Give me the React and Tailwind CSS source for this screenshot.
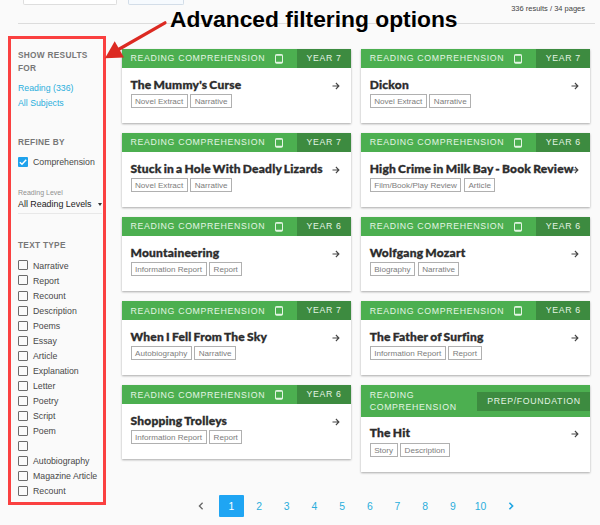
import clsx from 'clsx';

const textTypes = [
  'Narrative',
  'Report',
  'Recount',
  'Description',
  'Poems',
  'Essay',
  'Article',
  'Explanation',
  'Letter',
  'Poetry',
  'Script',
  'Poem',
  '',
  'Autobiography',
  'Magazine Article',
  'Recount',
];

const leftCards = [
  { title: "The Mummy's Curse", year: 'YEAR 7', tags: ['Novel Extract', 'Narrative'] },
  { title: 'Stuck in a Hole With Deadly Lizards', year: 'YEAR 7', tags: ['Novel Extract', 'Narrative'] },
  { title: 'Mountaineering', year: 'YEAR 6', tags: ['Information Report', 'Report'] },
  { title: 'When I Fell From The Sky', year: 'YEAR 7', tags: ['Autobiography', 'Narrative'] },
  { title: 'Shopping Trolleys', year: 'YEAR 6', tags: ['Information Report', 'Report'] },
];

const rightCards = [
  { title: 'Dickon', year: 'YEAR 7', tags: ['Novel Extract', 'Narrative'] },
  { title: 'High Crime in Milk Bay - Book Review', year: 'YEAR 6', tags: ['Film/Book/Play Review', 'Article'] },
  { title: 'Wolfgang Mozart', year: 'YEAR 6', tags: ['Biography', 'Narrative'] },
  { title: 'The Father of Surfing', year: 'YEAR 6', tags: ['Information Report', 'Report'] },
  { title: 'The Hit', year: 'PREP/FOUNDATION', tags: ['Story', 'Description'], tall: true },
];

const pages = [1, 2, 3, 4, 5, 6, 7, 8, 9, 10];

function TabletIcon() {
  return (
    <svg className="w-[8px] h-[10px] shrink-0" viewBox="0 0 8 10" fill="none">
      <rect x="0.5" y="0.6" width="7" height="8.6" rx="0.9" stroke="#e4f5e4" />
      <path d="M0.5 1.1h7M0.5 8.5h7" stroke="#e4f5e4" strokeWidth="1.3" />
    </svg>
  );
}

function ArrowIcon() {
  return (
    <svg className="w-[8px] h-[8px] shrink-0" viewBox="0 0 8 8" fill="none" stroke="#444" strokeWidth="1.1">
      <path d="M0.5 4h6.3M3.9 1L6.9 4L3.9 7" />
    </svg>
  );
}

function Checkbox({ label, checked }) {
  return (
    <label className="flex items-center h-[15.07px] gap-[5px]">
      <span
        className={clsx(
          'flex items-center justify-center w-[10px] h-[10px] rounded-[1px] shrink-0',
          checked ? 'bg-[#1fa2ec]' : 'border border-[#6b6b6b]'
        )}
      >
        {checked && (
          <svg className="w-[8px] h-[8px]" viewBox="0 0 8 8" fill="none" stroke="white" strokeWidth="1.4">
            <path d="M0.8 4.2L3 6.3L7.2 1.8" />
          </svg>
        )}
      </span>
      <span className="pt-px text-[8.75px] leading-none text-[#484848] whitespace-nowrap">{label}</span>
    </label>
  );
}

function SectionTitle({ children }) {
  return (
    <h3 className="text-[8.3px] leading-[12.7px] font-bold tracking-[0.28px] text-[#777]">{children}</h3>
  );
}

function Sidebar() {
  return (
    <aside className="w-[98px] h-[469px] mt-[12px] ml-[8px] shrink-0 border-[3px] border-[#fa4040] pl-[7px] pt-[10.3px]">
      <SectionTitle>
        SHOW RESULTS
        <br />
        FOR
      </SectionTitle>
      <div className="mt-[6px] text-[8.75px] leading-[15px] text-[#2aaedc]">
        <div>Reading (336)</div>
        <div>All Subjects</div>
      </div>

      <div className="mt-[25px]">
        <SectionTitle>REFINE BY</SectionTitle>
      </div>
      <div className="mt-[5.7px]">
        <Checkbox label="Comprehension" checked />
      </div>

      {/* Reading level select */}
      <div className="mt-[18.5px] w-[84px] h-[26px] border-b border-[#e8e8e8]">
        <div className="text-[7px] leading-[9px] text-[#919191]">Reading Level</div>
        <div className="flex items-center justify-between mt-[1.5px] text-[8.9px] leading-[13px] text-[#222] whitespace-nowrap">
          All Reading Levels
          <svg className="w-[4px] h-[3px]" viewBox="0 0 4 3">
            <path d="M0 0h4L2 3z" fill="#333" />
          </svg>
        </div>
      </div>

      <div className="mt-[25.5px]">
        <SectionTitle>TEXT TYPE</SectionTitle>
      </div>
      <div className="mt-[6px]">
        {textTypes.map((type, index) => (
          <Checkbox key={index} label={type} />
        ))}
      </div>
    </aside>
  );
}

function Card({ title, year, tags, tall }) {
  return (
    <div
      className={clsx(
        'w-[229.5px] bg-white shadow-[0_1px_2px_rgba(0,0,0,0.32)]',
        tall ? 'h-[86.5px]' : 'h-[74px]'
      )}
    >
      <div
        className={clsx(
          'flex items-center bg-[#4caf50] pl-[9px] text-[8.75px] tracking-[0.67px] text-[#e4f5e4]',
          tall ? 'h-[31.5px]' : 'h-[19px]'
        )}
      >
        <span className={clsx('leading-[12.5px]', tall ? 'w-[107.5px] shrink-0' : 'whitespace-nowrap')}>
          READING COMPREHENSION
        </span>
        {!tall && (
          <div className="ml-[9.5px]">
            <TabletIcon />
          </div>
        )}
        <span
          className={clsx(
            'ml-auto flex items-center h-[19px] bg-[#3d8b40] whitespace-nowrap',
            tall ? 'w-[113px] pl-[10px]' : 'w-[54.5px] pl-[10px]'
          )}
        >
          {year}
        </span>
      </div>
      <div className="pl-[9px] pr-[11.5px] pt-[8.5px]">
        <div className="flex items-center justify-between h-[16px]">
          <h2 className="min-w-0 flex-1 font-['Lato',sans-serif] font-black text-[12px] leading-[16px] tracking-[0.21px] [word-spacing:-1px] [-webkit-text-stroke:0.35px_#2c2c2c] text-[#2c2c2c] whitespace-nowrap">
            {title}
          </h2>
          <div className="pt-[2px]">
            <ArrowIcon />
          </div>
        </div>
        <div className="flex gap-[2.5px] mt-[1.5px]">
          {tags.map((tag) => (
            <span
              key={tag}
              className="h-[14px] border border-[#b0b0b0] px-[3.5px] text-[8.1px] leading-[13px] text-[#7d7d7d] whitespace-nowrap"
            >
              {tag}
            </span>
          ))}
        </div>
      </div>
    </div>
  );
}

function Pagination() {
  return (
    <nav className="flex items-center gap-[3px] h-[22px] ml-[69px] text-[10.4px] text-[#2aaedc]">
      <span className="flex justify-center w-[20px] mr-[5.5px]">
        <svg className="w-[6px] h-[8px]" viewBox="0 0 6 8" fill="none" stroke="#666" strokeWidth="1.3">
          <path d="M4.6 0.8L1.4 4L4.6 7.2" />
        </svg>
      </span>
      {pages.map((page) => (
        <span
          key={page}
          className={clsx(
            'flex items-center justify-center w-[24.7px] h-[22px] pt-px',
            page === 1 && 'rounded-[1px] bg-[#1fa5f3] text-white'
          )}
        >
          {page}
        </span>
      ))}
      <span className="flex justify-center w-[24.7px] ml-[2.5px]">
        <svg className="w-[6px] h-[8px]" viewBox="0 0 6 8" fill="none" stroke="#1fa5e3" strokeWidth="1.6">
          <path d="M1.4 0.8L4.6 4L1.4 7.2" />
        </svg>
      </span>
    </nav>
  );
}

export default function App() {
  return (
    <div className="relative w-[600px] h-[525px] overflow-hidden bg-[#fafafa] font-['Liberation_Sans',sans-serif]">
      {/* Top bar */}
      <header className="flex h-[24px] ml-[18px] mr-[5px] border-b border-[#dcdcdc]">
        <div className="w-[94px] h-[5px] ml-[5px] rounded-b-[2px] border border-t-0 border-[#dedede] bg-white" />
        <div className="w-[56px] h-[5px] ml-[11px] rounded-b-[2px] border border-t-0 border-[#d3dde8] bg-[#f6fafe]" />
        <div className="ml-auto mr-[10px] mt-[4px] text-[7.5px] leading-[10px] text-[#444]">336 results / 34 pages</div>
      </header>

      <div className="flex">
        <Sidebar />
        <main className="ml-[15.5px] mt-[25px]">
          <div className="flex gap-[9.7px] h-[446px]">
            <div className="flex flex-col gap-[10.1px]">
              {leftCards.map((card) => (
                <Card key={card.title} {...card} />
              ))}
            </div>
            <div className="flex flex-col gap-[10.1px]">
              {rightCards.map((card) => (
                <Card key={card.title} {...card} />
              ))}
            </div>
          </div>
          <Pagination />
        </main>
      </div>

      {/* Callout over the page */}
      <svg className="absolute left-0 top-0 w-[180px] h-[70px]" viewBox="0 0 180 70">
        <path d="M165 22.8L115 51.5" stroke="#dc2a22" strokeWidth="3.2" strokeLinecap="round" />
        <path d="M105 58.3L114.7 41.3L124 57.5z" fill="#dc2a22" />
      </svg>
      <div className="absolute left-[170px] top-[6px] text-[22.8px] leading-[26px] font-bold text-black whitespace-nowrap">
        Advanced filtering options
      </div>
    </div>
  );
}
